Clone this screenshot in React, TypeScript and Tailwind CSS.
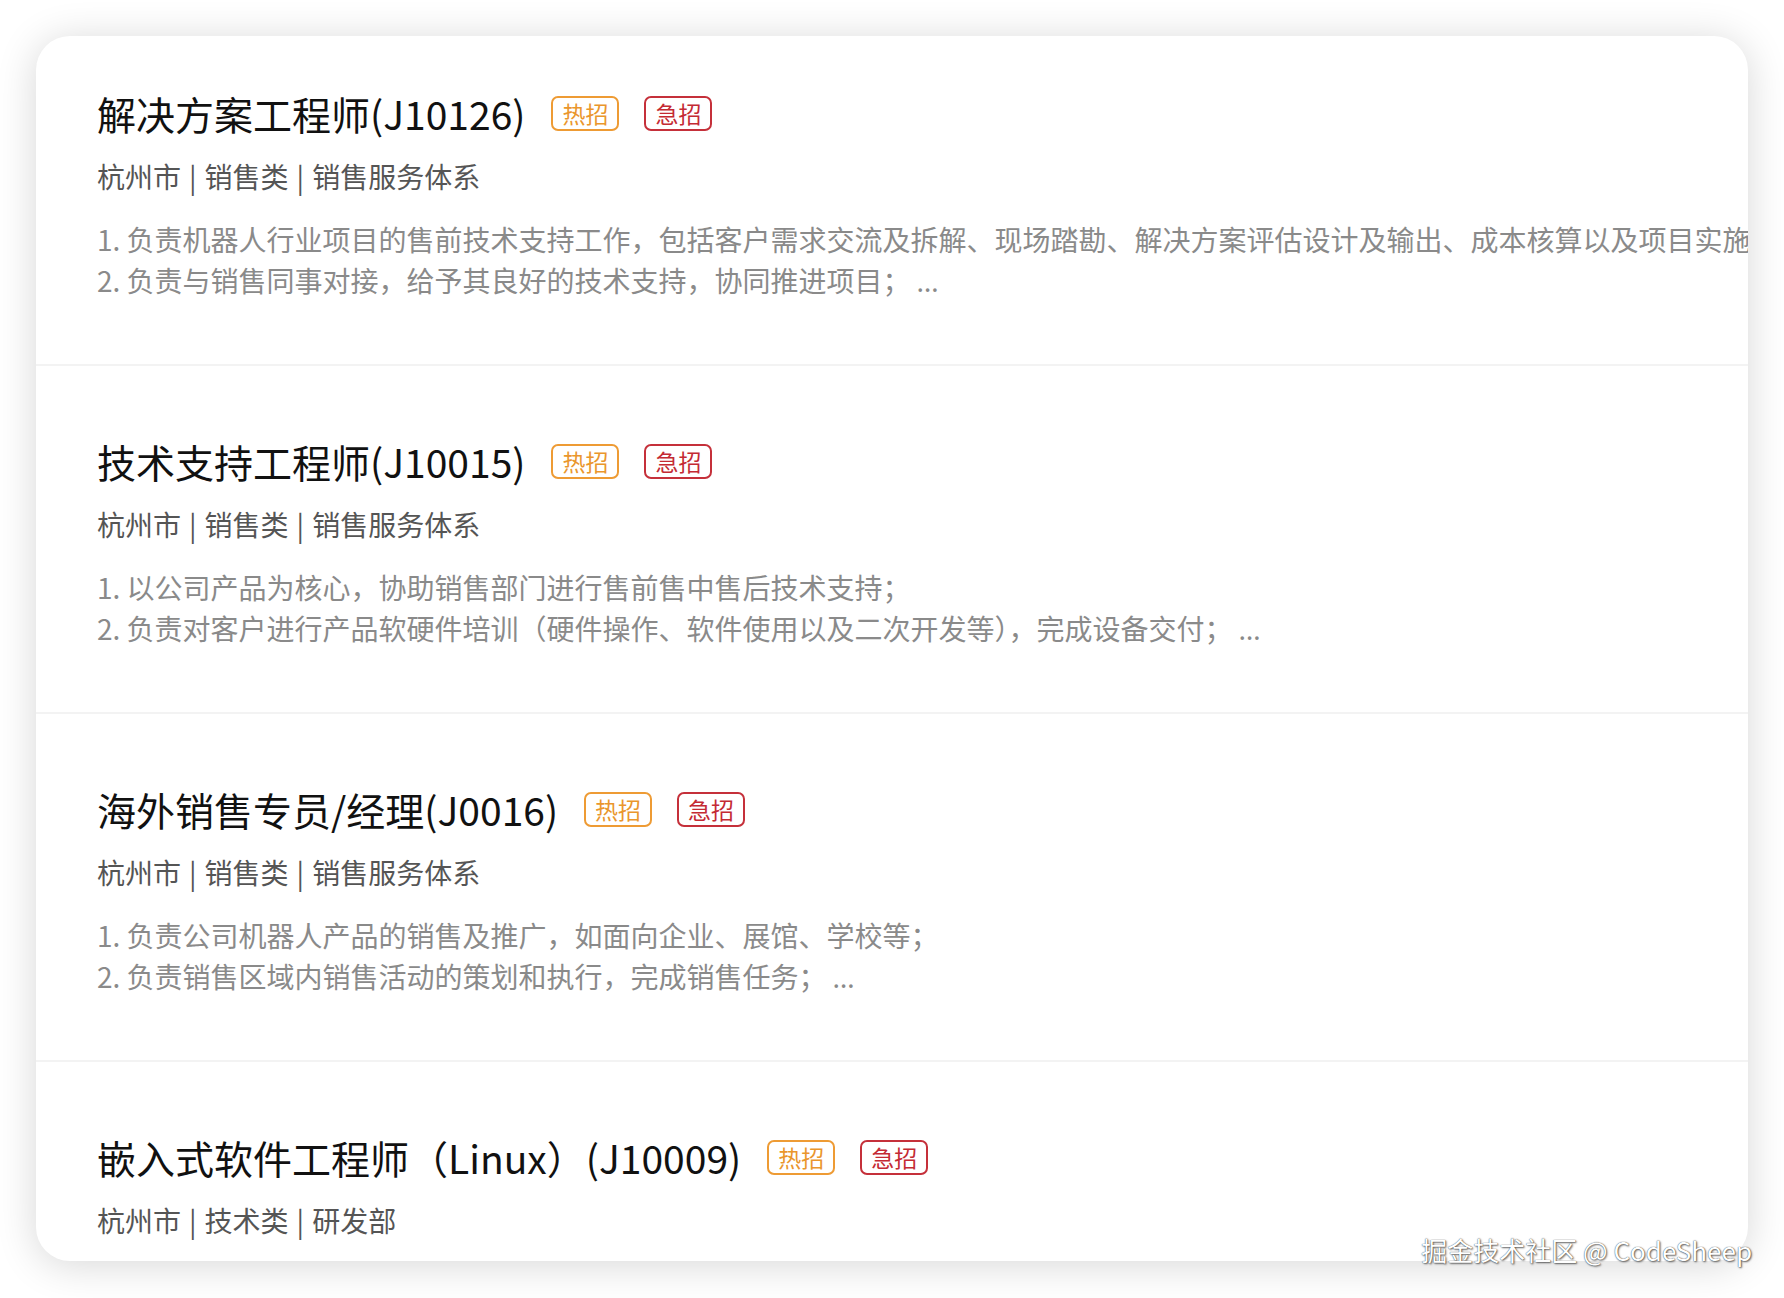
const jobs = [
  {
    title: "解决方案工程师(J10126)",
    meta: ["杭州市", "销售类", "销售服务体系"],
    desc: [
      "1. 负责机器人行业项目的售前技术支持工作，包括客户需求交流及拆解、现场踏勘、解决方案评估设计及输出、成本核算以及项目实施交付等工作；",
      "2. 负责与销售同事对接，给予其良好的技术支持，协同推进项目；",
    ],
  },
  {
    title: "技术支持工程师(J10015)",
    meta: ["杭州市", "销售类", "销售服务体系"],
    desc: [
      "1. 以公司产品为核心，协助销售部门进行售前售中售后技术支持；",
      "2. 负责对客户进行产品软硬件培训（硬件操作、软件使用以及二次开发等），完成设备交付；",
    ],
  },
  {
    title: "海外销售专员/经理(J0016)",
    meta: ["杭州市", "销售类", "销售服务体系"],
    desc: [
      "1. 负责公司机器人产品的销售及推广，如面向企业、展馆、学校等；",
      "2. 负责销售区域内销售活动的策划和执行，完成销售任务；",
    ],
  },
  {
    title: "嵌入式软件工程师（Linux）(J10009)",
    meta: ["杭州市", "技术类", "研发部"],
    desc: [],
  },
];

function Tag({ label, tone }: { label: string; tone: "hot" | "urgent" }) {
  return (
    <span
      className={
        tone === "hot"
          ? "flex h-[35px] items-center rounded-[7px] border-2 border-[#ee9b34] px-[9px] text-[23px] leading-none text-[#ea962c]"
          : "flex h-[35px] items-center rounded-[7px] border-2 border-[#c5303a] px-[9px] text-[23px] leading-none text-[#c42a33]"
      }
    >
      {label}
    </span>
  );
}

function JobRow({ job }: { job: (typeof jobs)[number] }) {
  return (
    <div className="border-b-2 border-[#f3f3f3] pb-[62px] pl-[61px] pt-[71px]">
      <div className="flex h-[48px] items-center">
        <h3 className="whitespace-nowrap text-[39px] font-normal leading-[48px] text-[#111111]">{job.title}</h3>
        <div className="ml-[26px] flex gap-[25px]">
          <Tag label="热招" tone="hot" />
          <Tag label="急招" tone="urgent" />
        </div>
      </div>
      <p className="mt-[20px] flex whitespace-nowrap text-[28px] leading-[38px] text-[#555555]">
        {job.meta.map((m, i) => (
          <span key={m + i} className="flex">
            {i > 0 && <span className="mx-[8px]">|</span>}
            {m}
          </span>
        ))}
      </p>
      {job.desc.length > 0 && (
        <div className="mt-[24px] text-[28px] leading-[41px] text-[#8a8a8a]">
          {job.desc.map((line, i) => (
            <p key={line} className="whitespace-nowrap">
              {line}
              {i === job.desc.length - 1 && (
                <span className="ml-[6px]" style={{ fontFamily: '"Noto Sans", sans-serif' }}>
                  …
                </span>
              )}
            </p>
          ))}
        </div>
      )}
    </div>
  );
}

export default function App() {
  return (
    <div
      className="relative min-h-[1298px] bg-white p-[36px]"
      style={{ fontFamily: '"Noto Sans CJK SC", "Noto Sans", sans-serif' }}
    >
      <div className="h-[1225px] overflow-hidden rounded-[34px] bg-white shadow-[0_4px_40px_rgba(0,0,0,0.16)]">
        <div className="-mt-[18px]">
          {jobs.map((job) => (
            <JobRow key={job.title} job={job} />
          ))}
        </div>
      </div>

      {/* watermark */}
      <span className="absolute bottom-[35px] right-[32px] text-[26px] leading-none text-white [text-shadow:0_0_1px_#222,1px_1px_2px_rgba(0,0,0,0.6)]">
        掘金技术社区 @ CodeSheep
      </span>
    </div>
  );
}
